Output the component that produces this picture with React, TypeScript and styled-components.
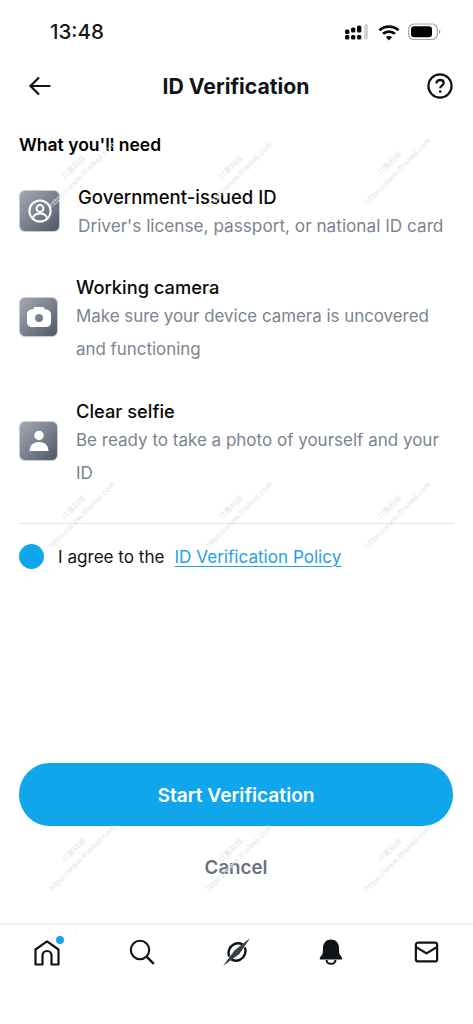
import React from "react";
import styled, { createGlobalStyle } from "styled-components";

const Global = createGlobalStyle`
  html, body { margin: 0; padding: 0; background: #fff; }
  * { box-sizing: border-box; }
  body { font-family: Inter, "Noto Sans CJK SC", sans-serif; }
`;

const Page = styled.div`
  position: relative;
  width: 473px;
  height: 1024px;
  overflow: hidden;
  display: flex;
  flex-direction: column;
  background: #fff;
  color: #0f1419;
`;

const StatusBar = styled.div`
  height: 62px;
  flex: none;
  padding: 20px 32px 0 50px;
  display: flex;
  justify-content: space-between;
  align-items: flex-start;
`;
const Clock = styled.span`
  font-size: 20.5px;
  line-height: 24px;
  font-weight: 500;
  color: #16181a;
`;
const StatusIcons = styled.div`
  display: flex;
  align-items: center;
  gap: 8px;
  height: 24px;
`;

const Header = styled.header`
  height: 48px;
  flex: none;
  padding: 0 20px 0 28px;
  display: flex;
  align-items: center;
  justify-content: space-between;
`;
const Title = styled.h1`
  margin: 0 7px 0 0;
  font-size: 21.2px;
  line-height: 48px;
  font-weight: 700;
`;

const Main = styled.main`
  padding: 0 19px;
  flex: none;
`;
const SectionTitle = styled.h2`
  margin: 0;
  padding-top: 23px;
  font-size: 17.5px;
  line-height: 24px;
  font-weight: 600;
  color: #000;
`;

const Req = styled.div<{ $top: number; $gap: number }>`
  display: flex;
  align-items: center;
  gap: ${(p) => p.$gap}px;
  margin-top: ${(p) => p.$top}px;
`;
const Tile = styled.div<{ $w: number; $lift: number }>`
  flex: none;
  width: ${(p) => p.$w}px;
  height: ${(p) => p.$w + 1}px;
  margin-bottom: ${(p) => p.$lift}px;
  border-radius: 6px;
  border: 1px solid #c8ccd2;
  background: linear-gradient(135deg, #a3a8b1 0%, #7b828e 50%, #4d5866 100%);
  display: flex;
  align-items: center;
  justify-content: center;
`;
const ReqText = styled.div`
  min-width: 0;
`;
const ReqTitle = styled.div<{ $size: number }>`
  font-size: ${(p) => p.$size}px;
  line-height: 24px;
  font-weight: 500;
  color: #0a0a0a;
`;
const ReqBody = styled.div<{ $size: number }>`
  margin-top: 1px;
  font-size: ${(p) => p.$size}px;
  line-height: 33px;
  font-weight: 400;
  color: #7a8492;
`;
const FirstBody = styled(ReqBody)`
  margin-top: 0;
  line-height: 34px;
`;

const Divider = styled.hr`
  border: 0;
  height: 1px;
  margin: 33px 0 0;
  background: #e3e5e8;
`;
const Agree = styled.div`
  display: flex;
  align-items: center;
  margin-top: 20px;
  height: 25px;
  font-size: 17.1px;
`;
const Dot = styled.span`
  width: 25px;
  height: 25px;
  border-radius: 50%;
  background: #11a5ec;
  margin-right: 14px;
`;
const PolicyLink = styled.a`
  margin-left: 10px;
  color: #1da1e8;
  text-decoration: underline;
  text-underline-offset: 3px;
  text-decoration-thickness: 1px;
`;

const Actions = styled.div`
  margin-top: auto;
  padding: 0 20px 0 19px;
  display: flex;
  flex-direction: column;
  align-items: stretch;
`;
const Primary = styled.button`
  height: 63px;
  border: 0;
  border-radius: 31px;
  background: #10a6eb;
  color: #fff;
  font: 600 19.2px Inter, sans-serif;
`;
const Cancel = styled.button`
  margin-top: 26px;
  height: 30px;
  border: 0;
  background: transparent;
  color: #6a7280;
  font: 600 18.7px Inter, sans-serif;
`;

const TabBar = styled.nav`
  margin-top: 41px;
  height: 101px;
  flex: none;
  border-top: 2px solid #f3f3f4;
  padding: 12px 32px 0 32px;
  display: flex;
  justify-content: space-between;
  align-items: flex-start;
`;
const Tab = styled.div`
  position: relative;
  width: 30px;
  height: 30px;
  display: flex;
  align-items: center;
  justify-content: center;
`;
const Badge = styled.span`
  position: absolute;
  top: -1px;
  right: -2px;
  width: 8px;
  height: 8px;
  border-radius: 50%;
  background: #1d9bf0;
`;

const Marks = styled.div`
  position: absolute;
  inset: 0;
  pointer-events: none;
`;
const Stamp = styled.div<{ $x: number; $y: number }>`
  position: absolute;
  left: ${(p) => p.$x}px;
  top: ${(p) => p.$y}px;
  width: 90px;
  transform: rotate(-45deg);
  text-align: center;
  font-size: 7.5px;
  line-height: 11px;
  color: #e2e4e7;
  white-space: nowrap;
`;

const stamps = [
  [33, 160], [190, 160], [349, 156],
  [33, 500], [190, 500], [349, 500],
  [33, 843], [190, 843], [349, 843],
];

const Arrow = () => (
  <svg width="24" height="24" viewBox="0 0 24 24" fill="none" stroke="#0f1419" strokeWidth="2.2">
    <path d="M22.5 12H2.5M11 3.5 2.5 12l8.5 8.5" />
  </svg>
);
const Help = () => (
  <svg width="26" height="26" viewBox="0 0 26 26" fill="none" stroke="#0f1419" strokeWidth="2.2">
    <circle cx="13" cy="13" r="11.6" />
    <path d="M9.4 10.4c0-2.1 1.6-3.4 3.7-3.4s3.6 1.2 3.6 3c0 2.7-3.5 2.6-3.5 5.2" strokeWidth="2.3" />
    <circle cx="13.2" cy="18.6" r="1.3" fill="#0f1419" stroke="none" />
  </svg>
);
const Signal = () => (
  <svg width="25" height="18" viewBox="0 0 25 18">
    <g fill="#0a0a0a">
      <rect x="0" y="6.5" width="4.4" height="4.4" rx="1.5" />
      <rect x="0" y="12" width="4.4" height="4.4" rx="1.5" />
      <rect x="6" y="4.5" width="4.4" height="5" rx="1.5" />
      <rect x="6" y="12" width="4.4" height="4.4" rx="1.5" />
      <rect x="12" y="2.5" width="4.4" height="7" rx="1.5" />
      <rect x="12" y="12" width="4.4" height="4.4" rx="1.5" />
    </g>
    <rect x="19" y="1" width="4" height="15.5" rx="1.5" fill="#d4d4d4" />
  </svg>
);
const Wifi = () => (
  <svg width="22" height="17" viewBox="0 0 22 17" fill="none" stroke="#0a0a0a" strokeWidth="2.8">
    <path d="M1.5 6.2c5.4-4.8 13.6-4.8 19 0M5 9.8c3.4-3 8.6-3 12 0" />
    <path d="M11 16.5 7.8 13c1.9-1.5 4.5-1.5 6.4 0z" fill="#0a0a0a" stroke="none" />
  </svg>
);
const Battery = () => (
  <svg width="33" height="18" viewBox="0 0 33 18">
    <rect x="0.7" y="1" width="28.6" height="15.5" rx="5" fill="none" stroke="#a6a6a6" strokeWidth="1.2" />
    <rect x="3" y="3.2" width="21" height="11" rx="3.2" fill="#000" />
    <path d="M31 6.5c1 .4 1.4 1.3 1.4 2.2S32 10.5 31 11z" fill="#a6a6a6" />
  </svg>
);

const IdIcon = () => (
  <svg width="26" height="26" viewBox="0 0 26 26" fill="none" stroke="#fff" strokeWidth="2">
    <circle cx="13" cy="13" r="10.6" />
    <circle cx="13" cy="10.5" r="3.4" />
    <path d="M6 19.8c1-3 3.6-4.3 7-4.3s6 1.3 7 4.3" />
  </svg>
);
const CameraIcon = () => (
  <svg width="26" height="24" viewBox="0 0 26 24">
    <path
      fillRule="evenodd"
      fill="#fff"
      d="M9.500 2h7c1 0 1.600.5 2 1.300L19 4.500h1c3 0 5 2 5 5v7.500c0 3-2 5-5 5H6c-3 0-5-2-5-5V9.500c0-3 2-5 5-5h1l.5-1.200C7.900 2.500 8.500 2 9.500 2zM13 9a4 4 0 1 0 0 8 4 4 0 0 0 0-8z"
    />
  </svg>
);
const PersonIcon = () => (
  <svg width="26" height="26" viewBox="0 0 26 26" fill="#fff">
    <circle cx="13" cy="7.500" r="4.700" />
    <path d="M3.500 23c.3-6 4-9 9.500-9s9.200 3 9.500 9z" />
  </svg>
);

const Home = () => (
  <svg width="26" height="27" viewBox="0 0 26 27" fill="none" stroke="#0f1419" strokeWidth="2.2" strokeLinejoin="round">
    <path d="M1.500 25.500V10.500L13 2.300l11.500 8.200v15h-7v-9a4.500 4.500 0 0 0-9 0v9z" />
  </svg>
);
const Search = () => (
  <svg width="26" height="26" viewBox="0 0 26 26" fill="none" stroke="#0f1419" strokeWidth="2.1">
    <circle cx="11" cy="11" r="9.200" />
    <path d="m17.800 17.800 7 7" strokeWidth="2.5" />
  </svg>
);
const Spark = () => (
  <svg width="32" height="32" viewBox="0 0 32 32" fill="none">
    <path d="M24.400 11c1.900 5-.3 10.700-5 13.100-3.100 1.500-6.600 1.400-9.400-.2M7.600 21c-1.900-5 .3-10.700 5-13.100 3.100-1.500 6.600-1.400 9.400.2" stroke="#0f1419" strokeWidth="2.6" />
    <path d="M30 1 18.500 18 1 31 13.500 14z" fill="#3a3f45" />
  </svg>
);
const Bell = () => (
  <svg width="24" height="26" viewBox="0 0 24 26">
    <path d="M12 .5c4.600 0 7.800 3.400 8 8l.2 5.500c.1 1.300 3 4 3 5.700 0 .6-.4.800-1 .8H1.800c-.6 0-1-.2-1-.8 0-1.700 2.900-4.400 3-5.700L4 8.500C4.200 3.900 7.400.5 12 .5z" fill="#0f1419" />
    <path d="M7.500 21c.2 2.300 2.200 3.800 4.500 3.800s4.300-1.500 4.500-3.800" fill="none" stroke="#0f1419" strokeWidth="2" />
  </svg>
);
const Mail = () => (
  <svg width="25" height="22" viewBox="0 0 26 24" fill="none" stroke="#0f1419" strokeWidth="2.4" strokeLinejoin="round">
    <rect x="1.400" y="1.700" width="23.200" height="20.600" rx="2.500" />
    <path d="m1.500 6.500 11.500 7 11.500-7" />
  </svg>
);

export default function App() {
  return (
    <Page>
      <Global />
      <StatusBar>
        <Clock>13:48</Clock>
        <StatusIcons>
          <Signal />
          <Wifi />
          <Battery />
        </StatusIcons>
      </StatusBar>
      <Header>
        <Arrow />
        <Title>ID Verification</Title>
        <Help />
      </Header>
      <Main>
        <SectionTitle>What you'll need</SectionTitle>
        <Req $top={28} $gap={18}>
          <Tile $w={41} $lift={6}><IdIcon /></Tile>
          <ReqText>
            <ReqTitle $size={18.5}>Government-issued ID</ReqTitle>
            <FirstBody $size={17.2}>Driver's license, passport, or national ID card</FirstBody>
          </ReqText>
        </Req>
        <Req $top={32} $gap={18}>
          <Tile $w={39} $lift={7}><CameraIcon /></Tile>
          <ReqText>
            <ReqTitle $size={18.3}>Working camera</ReqTitle>
            <ReqBody $size={16.9}>Make sure your device camera is uncovered and functioning</ReqBody>
          </ReqText>
        </Req>
        <Req $top={33} $gap={18}>
          <Tile $w={39} $lift={7}><PersonIcon /></Tile>
          <ReqText>
            <ReqTitle $size={18.3}>Clear selfie</ReqTitle>
            <ReqBody $size={17}>Be ready to take a photo of yourself and your ID</ReqBody>
          </ReqText>
        </Req>
        <Divider />
        <Agree>
          <Dot />
          <span>I agree to the</span>
          <PolicyLink>ID Verification Policy</PolicyLink>
        </Agree>
      </Main>
      <Actions>
        <Primary>Start Verification</Primary>
        <Cancel>Cancel</Cancel>
      </Actions>
      <TabBar>
        <Tab><Home /><Badge /></Tab>
        <Tab><Search /></Tab>
        <Tab><Spark /></Tab>
        <Tab><Bell /></Tab>
        <Tab><Mail /></Tab>
      </TabBar>
      <Marks>
        {stamps.map(([x, y]) => (
          <Stamp key={`${x}-${y}`} $x={x} $y={y}>
            IT黑科技
            <br />
            https://www.itheikeji.com
          </Stamp>
        ))}
      </Marks>
    </Page>
  );
}
